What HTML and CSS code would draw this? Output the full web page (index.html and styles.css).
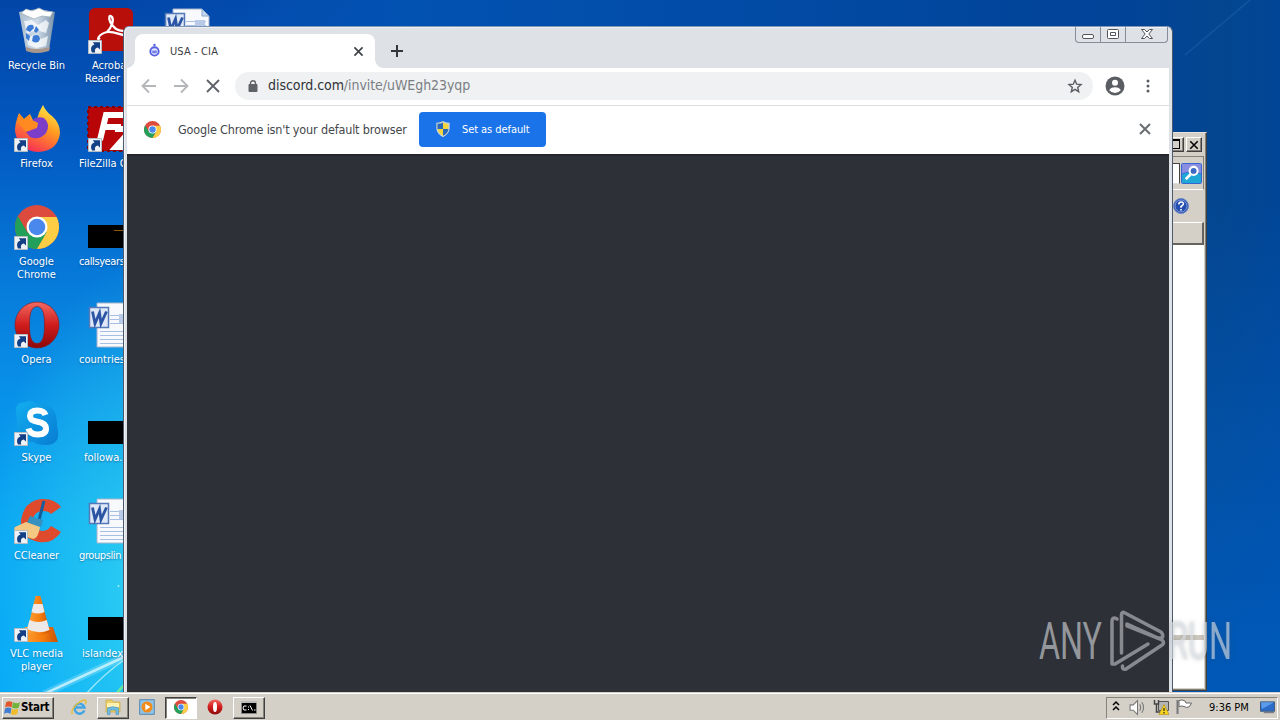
FILE: index.html
```html
<!DOCTYPE html>
<html lang="en">
<head>
<meta charset="utf-8">
<title>Desktop</title>
<link rel="stylesheet" href="styles.css">
</head>
<body>
<svg class="defs" width="0" height="0">
  <defs>
    <linearGradient id="gBlue" x1="0" y1="0" x2="1" y2="1"><stop offset="0" stop-color="#12aef0"/><stop offset="1" stop-color="#087cd2"/></linearGradient>
    <linearGradient id="gFox" x1=".8" y1="0" x2=".3" y2="1"><stop offset="0" stop-color="#fff04a"/><stop offset=".45" stop-color="#ff9820"/><stop offset="1" stop-color="#f8285a"/></linearGradient>
    <linearGradient id="gRed" x1="0" y1="0" x2="0" y2="1"><stop offset="0" stop-color="#f26a62"/><stop offset=".5" stop-color="#d01c1c"/><stop offset="1" stop-color="#8c0808"/></linearGradient>
    <linearGradient id="gCone" x1="0" y1="0" x2="1" y2="0"><stop offset="0" stop-color="#ffa53a"/><stop offset=".6" stop-color="#f47a0c"/><stop offset="1" stop-color="#c85204"/></linearGradient>
    <linearGradient id="gBin" x1="0" y1="0" x2="1" y2="0"><stop offset="0" stop-color="#b9c6d2"/><stop offset=".5" stop-color="#e2e9ee"/><stop offset="1" stop-color="#8095a8"/></linearGradient>
    <symbol id="arrow" viewBox="0 0 14 14"><path d="M.5.500h13v13H.5z" fill="#eef2f7" stroke="#b4bcc4"/><path d="M4 12.500C2 8.500 3.500 5.500 6.500 4.600L4.800 2.200H12V9.500L9.800 7.500C7.500 8 6.300 9.500 7.200 12.500z" fill="#123f86"/></symbol>
    <symbol id="chrome" viewBox="0 0 48 48"><circle cx="24" cy="24" r="22" fill="#dd4b3e"/><path d="M4.950 13A22 22 0 0 0 24 46L35 28 14.500 29.500z" fill="#22a05a"/><path d="M24 14H43.600A22 22 0 0 1 24 46L33.500 29.500z" fill="#fdce45"/><circle cx="24" cy="24" r="10.500" fill="#fff"/><circle cx="24" cy="24" r="8.300" fill="#4a88ee"/></symbol>
    <symbol id="opera" viewBox="0 0 48 48"><path fill-rule="evenodd" d="M24 1A22 23 0 0 1 24 47A22 23 0 0 1 24 1zM24 5.500C17.500 5.500 16.500 15 16.500 24C16.500 33 17.500 42.500 24 42.500C30.500 42.500 31.500 33 31.500 24C31.500 15 30.500 5.500 24 5.500z" fill="url(#gRed)" stroke="#8e1212" stroke-width=".6"/></symbol>
    <symbol id="word" viewBox="0 0 48 48"><path d="M11 1H40L47 8V45H11z" fill="#f7f9fd" stroke="#a6b4cc"/><path d="M40 1V8H47z" fill="#c6d8f0" stroke="#8ea6cc"/><path d="M24 13.500H44M24 17.500H44M24 21.500H44M14 29.500H44M14 33.500H44M14 37.500H44M14 41.500H44" stroke="#a8bfe4"/><path d="M33 12h10v9h-10z" fill="#b8cae8"/><path d="M3.500 5.500h19v20h-19z" fill="#dfe8f7" stroke="#5478b8" stroke-width="1.500"/><path d="M6.500 9.500L9 21.500 13.500 11 15 21.500 20.500 9.500" fill="none" stroke="#2b55a4" stroke-width="2.800"/></symbol>
    <symbol id="cross" viewBox="0 0 16 16"><path d="M3 3L13 13M13 3L3 13" fill="none" stroke="currentColor" stroke-width="2"/></symbol>
    <symbol id="shield" viewBox="0 0 16 16"><path d="M8 .8C10 2.200 12.500 2.300 14 2.300V7.500Q13.500 12.800 8 15.400Q2.500 12.800 2 7.500V2.300C3.500 2.300 6 2.200 8 .8z" fill="#f4d63c" stroke="#ccd6de" stroke-width="1.300"/><path d="M8 1.500V8H2.500V2.800Q6 3 8 1.500zM8 8H13.500Q13 12.500 8 14.800z" fill="#2868be"/></symbol>
  </defs>
</svg>

<main class="desktop">
  <svg class="wallpaper" viewBox="0 0 1280 720" aria-hidden="true">
    <path d="M44 694L124 657" stroke="#cff5ff" stroke-width="2.500" opacity=".85"/>
    <path d="M44 694L124 657" stroke="#cff5ff" stroke-width="7" opacity=".25"/>
    <path d="M86 694Q104 674 124 660" fill="none" stroke="#b8f2fb" stroke-width="1.500" opacity=".8"/>
    <path d="M116 694L124 685" stroke="#6ce89a" stroke-width="2.500"/>
    <circle cx="118.500" cy="586" r="1" fill="#a6eef8"/>
    <path d="M1250 0L1185 55" stroke="#4f94cc" stroke-width="1.500" opacity=".2"/>
  </svg>

  <section class="icons">
    <div class="column">
      <div class="item"><svg class="pic" viewBox="0 0 48 48"><path d="M7 4Q24-1 43 4L37 42Q24 47 14 42z" fill="url(#gBin)" opacity=".92"/><path d="M9 5L14 1 20 3 27 0 33 3 41 4 38 9 30 8 22 11 15 8z" fill="#fff" stroke="#9fb0ba" stroke-width=".8"/><path d="M12 13L20 12 26 17 34 12 37 15 34 25 24 22 15 26zM15 30L22 27 29 31 36 28 34 38 24 40 16 37z" fill="#fbfdfe" opacity=".75"/><path d="M14 22Q15 16 21 17L22 20 18 24zM24 18L27 22 24 25 22 23zM21 28Q27 25 28 31Q26 37 20 33zM14 25L18 28 17 33 14 30z" fill="#3b7bd6"/><path d="M14 39Q24 43 38 39L37 43Q24 47 14 43z" fill="#a8978a"/></svg><span>Recycle Bin</span></div>
      <div class="item"><svg class="pic" viewBox="0 0 48 48"><path d="M3 25Q3 17 7 7L12 13 18 8 21 14 25 13Q27 5 31-1Q34 6 40 10Q48 17 48 27Q46 45 26 46Q6 45 3 25z" fill="url(#gFox)"/><path d="M14 26L25 22 26 17 20 14Q25 10 32 12Q39 18 34 27Q27 35 18 31z" fill="#7c3ec8"/><path d="M5 15L7 8 12 13 18 8 18 14 26 18 17 25 13 25z" fill="#ff8a22"/><use href="#arrow" x="2" y="32" width="14" height="14"/></svg><span>Firefox</span></div>
      <div class="item"><svg class="pic" viewBox="0 0 48 48"><use href="#chrome" x="1" y="-1" width="48" height="48"/><use href="#arrow" x="2" y="32" width="14" height="14"/></svg><span>Google<br>Chrome</span></div>
      <div class="item"><svg class="pic" viewBox="0 0 48 48"><use href="#opera" x="1" y="-1" width="48" height="48"/><use href="#arrow" x="2" y="32" width="14" height="14"/></svg><span>Opera</span></div>
      <div class="item"><svg class="pic" viewBox="0 0 48 48"><path d="M4 10Q4 2 14 2Q18-1 24 3Q46 3 45 26Q50 45 34 45Q24 45 22 42Q4 42 5 22z" fill="url(#gBlue)"/><path d="M33.500 15Q32 10.500 25.500 10.500Q18 10.500 18 16Q18 20.500 25.500 21.700Q34 23 34 28.500Q34 34.500 25.500 34.500Q18 34.500 16.500 28.500" fill="none" stroke="#fff" stroke-width="6"/><use href="#arrow" x="2" y="32" width="14" height="14"/></svg><span>Skype</span></div>
      <div class="item"><svg class="pic" viewBox="0 0 48 48"><path d="M49 9Q42 0 29 1Q12 3 9 22Q8 41 27 44Q41 46 49 34L39 28Q34 35 27 32Q20 29 21 21Q23 13 31 13Q37 13 39 16z" fill="#e04a2c"/><path d="M32 3L27 22" stroke="#175d9c" stroke-width="3"/><path d="M18 18L31 22 29 29 15 25z" fill="#3690c0"/><path d="M14 24L28 29Q26 41 21 41L4 35Q1 32 3 29z" fill="#f3c883"/><use href="#arrow" x="2" y="32" width="14" height="14"/></svg><span>CCleaner</span></div>
      <div class="item"><svg class="pic" viewBox="0 0 48 48"><path d="M13 31H41L46 46H9z" fill="url(#gCone)"/><path d="M23.500 0H28.500L38 36Q26 42 15 36z" fill="url(#gCone)"/><path d="M21.500 8H30.500L32.500 16Q26 19 19.500 16zM17.500 24Q26 28 34.800 24L37.500 34Q26 39 15 33z" fill="#ece9e8"/><use href="#arrow" x="2" y="32" width="14" height="14"/></svg><span>VLC media<br>player</span></div>
    </div>
    <div class="column second">
      <div class="item"><svg class="pic" viewBox="0 0 48 48"><rect x="3" width="44" height="43" rx="6" fill="#b80f0a"/><path d="M14 30C10 34 12 26 21 24C26 19 28 12 26 9C23 5 21 12 28 19C32 25 42 21 41 26C39 30 30 23 21 24" fill="none" stroke="#fff" stroke-width="2.300"/><use href="#arrow" x="2" y="32" width="14" height="14"/></svg><span class="from14">Acroba</span><span class="from7">Reader</span></div>
      <div class="item"><svg class="pic" viewBox="0 0 48 48"><path d="M2 1h46v44H2z" fill="#b80508"/><path d="M2 1h46v44H2z" fill="none" stroke="#7e0508" stroke-width="2" stroke-dasharray="3 3"/><path d="M14 34L20 9H40M17 21H35M29 23H46L30 41H46" fill="none" stroke="#fff" stroke-width="6"/><use href="#arrow" x="2" y="32" width="14" height="14"/></svg><span>FileZilla C</span></div>
      <div class="item"><svg class="pic" viewBox="0 0 48 48"><path d="M2 21h47v23H2z"/><path d="M28 26.500h21" stroke="#8e5a10"/></svg><span class="tight">callsyears</span></div>
      <div class="item"><svg class="pic"><use href="#word"/></svg><span>countries</span></div>
      <div class="item"><svg class="pic" viewBox="0 0 48 48"><path d="M2 21h47v23H2z"/></svg><span class="from6">followa.</span></div>
      <div class="item"><svg class="pic"><use href="#word"/></svg><span class="tight">groupslin</span></div>
      <div class="item"><svg class="pic" viewBox="0 0 48 48"><path d="M2 21h47v23H2z"/></svg><span class="from4">islandex</span></div>
    </div>
    <div class="column"><div class="item"><svg class="pic"><use href="#word"/></svg></div></div>
  </section>

  <section class="explorer">
    <div class="ex-title"><i class="sq"><b></b></i><i class="sq"><svg viewBox="0 0 16 16"><use href="#cross"/></svg></i></div>
    <div class="ex-search"><i class="field"></i><svg viewBox="0 0 20 20"><rect width="20" height="20" rx="2" fill="#3766d2"/><path d="M1 11Q10 6 19 11V19H1z" fill="#1fa8d6"/><path d="M1 1h18v9Q10 6 1 10z" fill="#898ee0"/><circle cx="12" cy="7.500" r="3.800" fill="#3b69c4" stroke="#fff" stroke-width="2"/><path d="M9 11L4.500 15.500" stroke="#fff" stroke-width="2.500"/></svg></div>
    <div class="ex-help"><svg viewBox="0 0 16 16"><circle cx="8" cy="8" r="7.500" fill="#244db0" stroke="#6f89c4"/><circle cx="8" cy="8" r="6" fill="none" stroke="#a8bce8" stroke-width=".7"/><path d="M5.700 6.300Q6 4 8.200 4Q10.500 4 10.400 6Q10.300 7.200 8 8.500V9.800M8 11V12.500" fill="none" stroke="#fff" stroke-width="1.600"/></svg></div>
    <div class="ex-head"></div>
    <div class="ex-body"><i></i></div>
  </section>

  <section class="browser">
    <header class="tabs">
      <div class="tab">
        <svg class="fav" viewBox="0 0 14 16"><circle cx="7" cy="9" r="4.500" fill="#e6e8ff" stroke="#5560e0" stroke-width="2"/><circle cx="7" cy="2" r="1.300" fill="#5560e0"/><path d="M4.500 8h5v3h-5z" fill="#7780e8"/></svg>
        <span>USA - CIA</span>
        <svg class="x" viewBox="0 0 16 16"><use href="#cross"/></svg>
      </div>
      <svg class="plus" viewBox="0 0 14 14"><path d="M7 1V13M1 7H13" stroke="#33363a" stroke-width="2"/></svg>
      <div class="controls">
        <i><svg viewBox="0 0 14 14"><rect x="1.500" y="7.500" width="11" height="4" rx="1.500" fill="#fff" stroke="#50555c"/></svg></i>
        <i><svg viewBox="0 0 14 14"><rect x="1.500" y="2.500" width="11" height="9" rx="1" fill="#fff" stroke="#50555c"/><path d="M4.500 5.500h5v3h-5z" fill="none" stroke="#50555c"/></svg></i>
        <i><svg viewBox="0 0 14 14"><path d="M1.500 2.500H4.500L7 5 9.500 2.500H12.500L8.800 7 12.500 11.500H9.500L7 9 4.500 11.500H1.500L5.200 7z" fill="#fff" stroke="#50555c"/></svg></i>
      </div>
    </header>
    <div class="toolbar">
      <svg class="nav" viewBox="0 0 16 16"><path d="M15 8H2M8 1.500L1.500 8 8 14.500" fill="none" stroke="#b4b6b9" stroke-width="1.800"/></svg>
      <svg class="nav" viewBox="0 0 16 16"><path d="M1 8H14M8 1.500L14.500 8 8 14.500" fill="none" stroke="#b4b6b9" stroke-width="1.800"/></svg>
      <svg class="nav" viewBox="0 0 16 16"><path d="M2 2L14 14M14 2L2 14" stroke="#5f6368" stroke-width="1.900"/></svg>
      <div class="url">
        <svg class="lock" viewBox="0 0 10 12"><path d="M1 4.500h8v7H1z" fill="#5f6368" stroke="#5f6368"/><path d="M2.500 5V3.200a2.500 2.500 0 0 1 5 0V5" fill="none" stroke="#5f6368" stroke-width="1.400"/></svg>
        <p><b>discord.com</b>/invite/uWEgh23yqp</p>
        <svg class="star" viewBox="0 0 16 16"><path d="M8 2.200L9.700 6.200 14 6.600 10.700 9.400 11.700 13.700 8 11.400 4.300 13.700 5.300 9.400 2 6.600 6.300 6.200z" fill="none" stroke="#5a5e63" stroke-width="1.400"/></svg>
      </div>
      <svg class="user" viewBox="0 0 20 20"><circle cx="10" cy="10" r="9.500" fill="#5a5d62"/><circle cx="10" cy="6.800" r="3" fill="#fff"/><path d="M4.200 14.300Q5.500 11.300 10 11.300Q14.500 11.300 15.800 14.300Q13.500 17 10 17Q6.500 17 4.200 14.300z" fill="#fff"/></svg>
      <svg class="dots" viewBox="0 0 4 16"><circle cx="2" cy="3" r="1.500" fill="#5a5d62"/><circle cx="2" cy="8" r="1.500" fill="#5a5d62"/><circle cx="2" cy="13" r="1.500" fill="#5a5d62"/></svg>
    </div>
    <div class="infobar">
      <svg class="logo" viewBox="2 2 44 44"><use href="#chrome" width="48" height="48"/></svg>
      <span class="msg">Google Chrome isn't your default browser</span>
      <div class="primary"><svg viewBox="0 0 16 16"><use href="#shield"/></svg><span>Set as default</span></div>
      <svg class="dismiss" viewBox="0 0 16 16"><use href="#cross"/></svg>
    </div>
    <div class="page"></div>
  </section>

  <svg class="mark" viewBox="0 0 200 70">
    <g class="mark-text"><text x="4" y="53" textLength="63" lengthAdjust="spacingAndGlyphs">ANY</text><text class="over-light" x="133" y="53" textLength="64" lengthAdjust="spacingAndGlyphs">RUN</text></g>
    <g opacity=".75" fill="none" stroke="#a6a9ad" stroke-width="3.500" stroke-linejoin="round" stroke-linecap="round"><path d="M82 13Q77 10 77 16V58L80 58 113 38"/><path d="M86.500 47V9Q86.500 5 90 7L126 26Q129 29 127 32L123 32 92 18V20L127 34Q130 37 127 39L91 63Q87 64 87.500 60"/></g>
  </svg>
</main>

<footer class="taskbar">
  <div class="btn start"><svg viewBox="0 0 16 16"><path d="M2 3Q5 1 8 3L7 8Q4 6 1 8z" fill="#e2572c"/><path d="M8.500 3Q12 5 15 3L14 8Q11 10 7.500 8z" fill="#72b43a"/><path d="M1 9Q4 7 7 9L6 14Q3 12 0 14z" fill="#3f7ed0"/><path d="M7.500 9Q10 11 13.500 9L12.500 14Q9 16 6.500 14z" fill="#efbc2c"/></svg><span>Start</span></div>
  <div class="slot"><svg viewBox="0 0 16 16"><path d="M13.300 11.500A5 5 0 1 1 13.500 8.500H4.500" fill="none" stroke="#42a5e4" stroke-width="2.400"/><path d="M1.500 15Q-1 12 6 5Q14-1 15 2Q15.500 3 14 5" fill="none" stroke="#e4bd37" stroke-width="1.400"/></svg></div>
  <div class="slot btn"><svg viewBox="0 0 16 16"><path d="M1 1h6l1 2h7v10H1z" fill="#edce68" stroke="#c9a73f" stroke-width=".7"/><path d="M2 4h12v4H2z" fill="#fff2b0"/><path d="M2.500 15.500V9Q8 6.500 13.500 9V15.500H11V11H5V15.500z" fill="#72bfe4" stroke="#408fc0" stroke-width=".6"/></svg></div>
  <div class="slot"><svg viewBox="0 0 16 16"><path d="M.7.700h14.600v14.600H.7z" fill="#8fc4e6" stroke="#5585b0"/><circle cx="8" cy="8" r="5.500" fill="#f28b19"/><path d="M6.300 4.800L11.500 8 6.300 11.200z" fill="#fff"/></svg></div>
  <div class="slot btn pressed"><svg class="small" viewBox="2 2 44 44"><use href="#chrome" width="48" height="48"/></svg></div>
  <div class="slot"><svg viewBox="0 0 16 16"><circle cx="8" cy="8" r="7.500" fill="url(#gRed)"/><ellipse cx="8" cy="8" rx="2" ry="5" fill="#fff"/></svg></div>
  <div class="slot btn"><svg viewBox="0 0 16 16"><path d="M.5 2.500h15v12H.5z" stroke="#868686"/><path d="M0 2h16v2H0z" fill="#bbb"/><path d="M5.500 7Q2 6 2 9Q2 12 5.500 11M7.500 7.500v1M7.500 10v1M9 6.500L11.500 11.500M13 11h1.500" fill="none" stroke="#fff"/></svg></div>
  <div class="tray">
    <svg class="chev" viewBox="0 0 8 12"><path d="M1 5L4 2 7 5M1 10L4 7 7 10" fill="none" stroke="#000" stroke-width="1.500"/></svg>
    <svg class="spk" viewBox="0 0 16 16"><path d="M1 5.500h3L8 1.500v13L4 10.500H1z" fill="#fff" stroke="#777"/><path d="M10 5Q12 8 10 11M12 3Q15.500 8 12 13" fill="none" stroke="#777"/></svg>
    <svg class="net" viewBox="0 0 16 16"><path d="M5.500 2.500h10v9h-10z" fill="#b4b4b4" stroke="#555"/><path d="M1.500 1V5H5.500V1M3.500 5V13H7" fill="none" stroke="#444" stroke-width="1.500"/><path d="M11 5.500L16 15.500H6z" fill="#f7d51e" stroke="#b38b08" stroke-width=".6"/><path d="M11 9v3M11 13v1.500" stroke="#222" stroke-width="1.200"/></svg>
    <svg class="flag" viewBox="0 0 16 16"><path d="M1.500 1v14" stroke="#777" stroke-width="2"/><path d="M3 1.500Q6 0 9 2L10 4H15.500L13.500 7.500Q11 9.500 8 7.500Q6 6.500 3 7.500z" fill="#fff" stroke="#666"/></svg>
    <span>9:36 PM</span>
    <svg class="show" viewBox="0 0 16 13"><path d="M.5.500h15v10H.5z" fill="#2d6bc8" stroke="#3c5674"/><path d="M1 1h14L2 8z" fill="#5c9bea"/><path d="M4 12h11" stroke="#667"/></svg>
  </div>
</footer>
</body>
</html>
```
FILE: styles.css
```css
* { box-sizing: border-box; }
body {
  margin: 0;
  width: 1280px;
  height: 720px;
  overflow: hidden;
  display: flex;
  flex-direction: column;
  font: 11px/13px "DejaVu Sans Condensed", "DejaVu Sans", sans-serif;
  font-stretch: condensed;
}
svg { display: block; flex: none; }
i { font-style: normal; display: block; }
.defs { position: absolute; }

.desktop {
  position: relative;
  flex: 1;
  overflow: hidden;
  background:
    radial-gradient(ellipse 170px 330px at 150px 590px, rgba(60, 222, 240, .75), transparent),
    linear-gradient(90deg, transparent 125px, #0252b2 400px, #014397 1130px, #04468f 1220px, #014697 1280px),
    linear-gradient(#0346a8 0, #0257bf 130px, #0678d8 270px, #0890e8 390px, #08a6f4 530px, #06a8f8 692px);
}
.desktop::before {
  content: "";
  position: absolute;
  inset: 0 0 0 1172px;
  background: linear-gradient(transparent 200px, rgba(0, 94, 194, .75) 640px);
}
.wallpaper { position: absolute; inset: 0 auto auto 0; width: 1280px; height: 720px; }

.icons { position: relative; display: flex; margin-left: -1px; }
.column { width: 75px; display: grid; grid-auto-rows: 98px; }
.item { padding-top: 8px; color: #fff; display: flex; flex-direction: column; align-items: center; text-align: center; text-shadow: 0 1px 2px rgba(0, 30, 80, .45); white-space: nowrap; }
.pic { width: 48px; height: 48px; margin: 0 2px 3px 0; overflow: visible; }
.second { padding-left: 5px; }
.second .item { align-items: flex-start; }
.second .pic { margin-left: 7px; }
.second .tight { letter-spacing: -.4px; }
.second .from4 { padding-left: 3px; }
.second .from6 { padding-left: 5px; }
.second .from7 { padding-left: 6px; }
.second .from14 { padding-left: 13px; }

.explorer {
  position: absolute; left: 1150px; top: 132px; width: 57px; height: 559px;
  background: #d4d0c8;
  border: 1px solid #e6e3dd; border-right-color: #404040; border-bottom-color: #404040;
  padding: 3px 2px 2px 0;
  box-shadow: inset -1px -1px #858278;
  display: flex; flex-direction: column;
}
.ex-title { height: 20px; display: flex; justify-content: flex-end; gap: 2px; padding: 1px 2px 0 0; }
.sq { width: 16px; height: 15px; background: #d4d0c8; border: 1px solid #fff; border-right-color: #404040; border-bottom-color: #404040; padding: 1px; box-shadow: inset -1px -1px #868279; }
.sq b { display: block; width: 10px; height: 10px; border: 1px solid #000; border-top-width: 2px; }
.sq svg { width: 12px; height: 12px; color: #000; }
.ex-search { height: 34px; display: flex; align-items: center; justify-content: flex-end; gap: 1px; border: 1px solid #fff; border-top-color: #858278; border-right-color: #858278; padding-right: 1px; }
.field { width: 30px; height: 21px; background: #fff; border: 1px solid #444; border-bottom-color: #ddd; }
.ex-search svg { width: 21px; height: 21px; }
.ex-help { height: 32px; display: flex; align-items: center; justify-content: flex-end; padding-right: 15px; }
.ex-help svg { width: 16px; height: 16px; }
.ex-head { height: 23px; border: 1px solid #fff; border-right: 2px solid #66635d; border-bottom: 2px solid #66635d; }
.ex-body { flex: 1; background: #fff; padding-top: 390px; }
.ex-body i { height: 5px; background: #ccc8bd; }

.browser {
  position: absolute; left: 123px; top: 26px; width: 1050px; height: 680px;
  background: #dee1e6;
  border: 1px solid #4b5a6c;
  border-top-color: #7d97b5;
  border-radius: 6px 6px 0 0;
  padding: 0 3px;
  box-shadow: inset 1px 1px #eef0f4;
  display: flex; flex-direction: column;
}
.tabs { height: 41px; display: flex; align-items: flex-start; }
.tab { position: relative; width: 240px; height: 34px; margin: 7px 0 0 8px; padding: 0 10px 0 14px; background: #fff; border-radius: 8px 8px 0 0; display: flex; align-items: center; color: #3c4043; }
.tab::before, .tab::after { content: ""; position: absolute; bottom: 0; width: 8px; height: 8px; }
.tab::before { left: -8px; background: radial-gradient(circle at 0 0, transparent 7.5px, #fff 8px); }
.tab::after { right: -8px; background: radial-gradient(circle at 100% 0, transparent 7.5px, #fff 8px); }
.fav { width: 13px; height: 15px; margin: -2px 9px 0 -1px; }
.tab span { flex: 1; letter-spacing: .12px; }
.x { width: 13px; height: 13px; color: #3c4043; }
.plus { width: 14px; height: 14px; margin: 17px 0 0 15px; }
.controls { margin-left: auto; margin-right: 1px; height: 16px; display: flex; border: 1px solid #858d98; border-top: 0; border-radius: 0 0 4px 4px; }
.controls i { width: 25px; display: flex; justify-content: center; border-right: 1px solid #858d98; }
.controls i:last-child { width: 41px; border: 0; }
.controls svg { width: 14px; height: 14px; }

.toolbar { height: 38px; background: #fff; border-bottom: 1px solid #dadce0; display: flex; align-items: center; padding: 0 19px 2px 14px; }
.nav { width: 16px; height: 16px; margin-right: 16px; }
.url { width: 858px; height: 28px; margin-left: -2px; background: #eff1f3; border-radius: 14px; display: flex; align-items: center; padding: 0 10px 0 13px; }
.lock { width: 10px; height: 12px; margin-right: 10px; }
.url p { flex: 1; margin: 0; font-size: 14px; letter-spacing: -.06px; color: #7a7e83; }
.url b { font-weight: 400; color: #303338; }
.star { width: 16px; height: 16px; }
.user { width: 20px; height: 20px; margin-left: 12px; }
.dots { width: 4px; height: 16px; margin-left: auto; }

.infobar { height: 48px; background: #fff; display: flex; align-items: center; padding: 0 16px 2px 17px; }
.logo { width: 17px; height: 17px; }
.msg { width: 229px; margin: 0 12px 0 17px; font-size: 12.5px; color: #44474b; white-space: nowrap; letter-spacing: -.16px; }
.primary { width: 127px; height: 35px; border-radius: 4px; background: #1a73e8; color: #fff; display: flex; align-items: center; padding-left: 16px; gap: 11px; }
.primary svg { width: 16px; height: 16px; }
.primary span { white-space: nowrap; letter-spacing: -.07px; }
.dismiss { width: 16px; height: 16px; margin-left: auto; color: #6a6d71; }
.page { flex: 1; background: #2d3037; border-top: 2px solid #24262c; }

.mark { position: absolute; left: 1035px; top: 606px; width: 200px; height: 70px; overflow: visible; }
.mark-text { fill: #a6a9ad; fill-opacity: .85; font: 400 52px Roboto, sans-serif; }
.over-light { fill: #dfe4ea; fill-opacity: .6; filter: drop-shadow(0 0 2px rgba(70, 75, 85, .5)); }

.taskbar { height: 28px; background: #d4d0c8; border-top: 1px solid #d4d0c8; box-shadow: inset 0 1px #fff; display: flex; align-items: center; padding: 3px 2px 1px; color: #000; }
.btn { border: 1px solid #fff; border-right-color: #404040; border-bottom-color: #404040; box-shadow: inset -1px -1px #85827a; }
.start { width: 52px; height: 22px; margin-right: 9px; display: flex; align-items: center; font-weight: 700; }
.start svg { width: 17px; height: 17px; margin-left: 1px; }
.start span { font-size: 11.5px; letter-spacing: -.25px; }
.slot { width: 32px; height: 22px; margin-right: 2px; display: flex; align-items: center; justify-content: center; padding-bottom: 1px; }
.slot svg { width: 16px; height: 16px; }
.slot .small { width: 14px; height: 14px; }
.pressed { background: #fff; border-color: #404040 #fff #fff #404040; box-shadow: inset 1px 1px #85827a; }
.tray { width: 172px; height: 22px; margin-left: auto; border: 1px solid #fff; border-top-color: #858278; border-left-color: #858278; display: flex; align-items: center; padding: 0 2px 1px 5px; }
.chev { width: 8px; height: 12px; margin-top: -2px; }
.spk { width: 17px; height: 17px; margin-left: 9px; }
.net { width: 16px; height: 16px; margin-left: 7px; }
.flag { width: 16px; height: 16px; margin-left: 7px; }
.tray span { margin-left: 17px; white-space: nowrap; }
.show { width: 15px; height: 13px; margin-left: auto; }
```
